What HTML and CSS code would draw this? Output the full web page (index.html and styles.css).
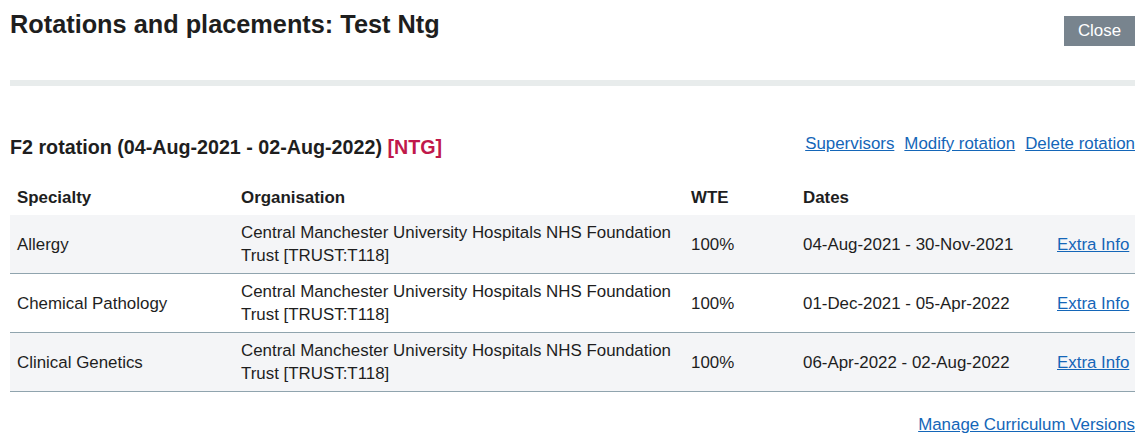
FILE: index.html
```html
<!DOCTYPE html>
<html lang="en">
<head>
<meta charset="utf-8">
<title>Rotations and placements</title>
<link rel="stylesheet" href="styles.css">
</head>
<body>
<div class="page">
  <div class="header">
    <h1 class="title">Rotations and placements: Test Ntg</h1>
    <button class="close-btn" type="button">Close</button>
  </div>
  <div class="separator"></div>

  <div class="rotation-head">
    <h2 class="rotation-title">F2 rotation (04-Aug-2021 - 02-Aug-2022) <span class="tag">[NTG]</span></h2>
    <div class="actions">
      <a href="#" class="link">Supervisors</a>
      <a href="#" class="link">Modify rotation</a>
      <a href="#" class="link">Delete rotation</a>
    </div>
  </div>

  <table class="placements">
    <colgroup>
      <col class="c-spec">
      <col class="c-org">
      <col class="c-wte">
      <col class="c-dates">
      <col class="c-extra">
    </colgroup>
    <thead>
      <tr>
        <th>Specialty</th>
        <th>Organisation</th>
        <th>WTE</th>
        <th>Dates</th>
        <th></th>
      </tr>
    </thead>
    <tbody>
      <tr>
        <td>Allergy</td>
        <td>Central Manchester University Hospitals NHS Foundation Trust [TRUST:T118]</td>
        <td>100%</td>
        <td>04-Aug-2021 - 30-Nov-2021</td>
        <td class="extra"><a href="#" class="link">Extra Info</a></td>
      </tr>
      <tr>
        <td>Chemical Pathology</td>
        <td>Central Manchester University Hospitals NHS Foundation Trust [TRUST:T118]</td>
        <td>100%</td>
        <td>01-Dec-2021 - 05-Apr-2022</td>
        <td class="extra"><a href="#" class="link">Extra Info</a></td>
      </tr>
      <tr>
        <td>Clinical Genetics</td>
        <td>Central Manchester University Hospitals NHS Foundation Trust [TRUST:T118]</td>
        <td>100%</td>
        <td>06-Apr-2022 - 02-Aug-2022</td>
        <td class="extra"><a href="#" class="link">Extra Info</a></td>
      </tr>
    </tbody>
  </table>

  <div class="footer">
    <a href="#" class="link">Manage Curriculum Versions</a>
  </div>
</div>
</body>
</html>
```

FILE: styles.css
```css
html, body {
  margin: 0;
  padding: 0;
  background: #ffffff;
}

body {
  font-family: "Liberation Sans", Arial, sans-serif;
  font-size: 16.9px;
  color: #1e1e1e;
}

.page {
  padding: 10px 10px 0 10px;
}

.header {
  display: flex;
  justify-content: space-between;
  align-items: flex-start;
  height: 36px;
}

.title {
  margin: 0;
  font-size: 25.3px;
  line-height: 28px;
  font-weight: bold;
  color: #1e1e1e;
}

.close-btn {
  margin-top: 6px;
  height: 30px;
  width: 71px;
  padding: 0;
  border: none;
  background: #78848e;
  color: #ffffff;
  font-family: "Liberation Sans", Arial, sans-serif;
  font-size: 16.9px;
}

.separator {
  margin-top: 34px;
  height: 6px;
  background: #e8ecec;
}

.rotation-head {
  margin-top: 48px;
  display: flex;
  justify-content: space-between;
  align-items: flex-start;
}

.rotation-title {
  margin: 0;
  font-size: 19.7px;
  line-height: 26px;
  font-weight: bold;
  color: #1e1e1e;
}

.tag {
  color: #c0184a;
}

.actions {
  display: flex;
  gap: 10px;
  line-height: 20px;
}

.link {
  color: #1466b8;
  text-decoration: underline;
}

.placements {
  margin-top: 20px;
  width: 100%;
  border-collapse: collapse;
  table-layout: fixed;
}

.c-spec { width: 224px; }
.c-org { width: 450px; }
.c-wte { width: 112px; }
.c-dates { width: 254px; }
.c-extra { width: 85px; }

.placements th,
.placements td {
  padding: 6px 7px;
  line-height: 23px;
  text-align: left;
  vertical-align: middle;
}

.placements td.extra {
  white-space: nowrap;
  padding-right: 0;
}

.placements th {
  font-weight: bold;
}

.placements tbody td {
  border-bottom: 1px solid #90a4ae;
}

.placements tbody tr:nth-child(odd) {
  background: #f4f5f7;
}

.footer {
  margin-top: 23px;
  text-align: right;
  line-height: 20px;
}
```
